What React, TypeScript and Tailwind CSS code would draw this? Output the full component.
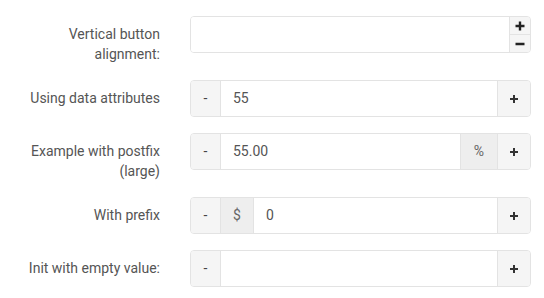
import React from 'react'

type Row = {
  label: string[]
  value: string
  prefix?: string
  postfix?: string
}

const rows: Row[] = [
  { label: ['Using data attributes'], value: '55' },
  { label: ['Example with postfix', '(large)'], value: '55.00', postfix: '%' },
  { label: ['With prefix'], value: '0', prefix: '$' },
  { label: ['Init with empty value:'], value: '' },
]

const Label = ({ lines }: { lines: string[] }) => (
  <div className="w-[160px] shrink-0 pt-[9px] text-right text-[14px] leading-[19.5px] text-[#555]">
    {lines.map((l) => (
      <div key={l}>{l}</div>
    ))}
  </div>
)

const StepButton = ({ children, side }: { children: React.ReactNode; side: 'l' | 'r' }) => (
  <div
    className={`flex items-center justify-center bg-[#f5f5f5] text-[#333] ${
      side === 'l' ? 'w-[30px] border-r border-[#e3e3e3]' : 'w-[33px] border-l border-[#e3e3e3]'
    }`}
  >
    {children}
  </div>
)

const Addon = ({ text, w }: { text: string; w: string }) => (
  <div className={`flex ${w} items-center justify-center border-[#e3e3e3] bg-[#eeeeee] text-[14px] text-[#666]`}>
    {text}
  </div>
)

const App = () => {
  return (
    <div
      className="w-[544px] h-[298px] bg-white pt-[16px]"
      style={{ fontFamily: 'Roboto, "Noto Sans", sans-serif' }}
    >
      {/* vertical buttons */}
      <div className="flex h-[49px] mb-[15px] gap-[30px]">
        <Label lines={['Vertical button', 'alignment:']} />
        <div className="flex h-[37px] w-[341px] overflow-hidden rounded-[4px] border border-[#e3e3e3]">
          <div className="flex-1 bg-white" />
          <div className="flex w-[21px] flex-col border-l border-[#e3e3e3] bg-[#f5f5f5]">
            <div className="flex flex-1 items-center justify-center border-b border-[#e3e3e3]">
              <svg width="10" height="10" viewBox="0 0 10 10">
                <path d="M5 0.5v9M0.5 5h9" stroke="#222" strokeWidth="2.4" />
              </svg>
            </div>
            <div className="flex flex-1 items-center justify-center">
              <svg width="10" height="10" viewBox="0 0 10 10">
                <path d="M0.5 5h9" stroke="#222" strokeWidth="2.4" />
              </svg>
            </div>
          </div>
        </div>
      </div>

      {rows.map((row) => (
        <div
          key={row.label[0]}
          className={`flex gap-[30px] ${row.label.length > 1 ? 'h-[48px] mb-[16px]' : 'h-[37px] mb-[16px]'}`}
        >
          <Label lines={row.label} />
          <div className="flex h-[37px] w-[341px] overflow-hidden rounded-[4px] border border-[#e3e3e3] text-[14px]">
            <StepButton side="l">
              <span className="text-[14px] text-[#444]">-</span>
            </StepButton>
            {row.prefix && <Addon text={row.prefix} w="w-[33px] border-r" />}
            <div className="flex flex-1 items-center bg-white px-[12px] text-[#555]">{row.value}</div>
            {row.postfix && <Addon text={row.postfix} w="w-[37px] border-l" />}
            <StepButton side="r">
              <svg width="8" height="8" viewBox="0 0 8 8">
                <path d="M4 0v8M0 4h8" stroke="#333" strokeWidth="2" />
              </svg>
            </StepButton>
          </div>
        </div>
      ))}
    </div>
  )
}

export default App
